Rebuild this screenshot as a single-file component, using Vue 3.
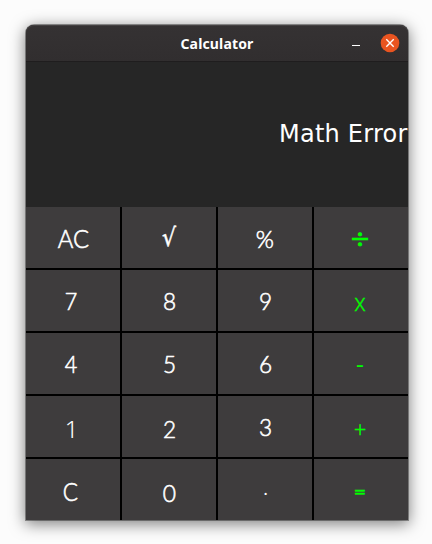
<script setup>
const keys = [
  { label: 'AC', kind: 'letters' }, { label: '√', kind: 'root' }, { label: '%', kind: 'percent' }, { label: '÷', kind: 'op divide' },
  { label: '7', kind: 'digit left' }, { label: '8', kind: 'digit' }, { label: '9', kind: 'digit' }, { label: 'x', kind: 'op times' },
  { label: '4', kind: 'digit left' }, { label: '5', kind: 'digit' }, { label: '6', kind: 'digit' }, { label: '-', kind: 'op minus' },
  { label: '1', kind: 'digit low one' }, { label: '2', kind: 'digit low' }, { label: '3', kind: 'digit' }, { label: '+', kind: 'op plus' },
  { label: 'C', kind: 'letters clear' }, { label: '0', kind: 'digit zero' }, { label: '.', kind: 'dot' }, { label: '=', kind: 'op equals' },
]
</script>

<template>
  <main class="desktop">
    <section class="window">
      <header class="titlebar">
        <span></span>
        <h1>Calculator</h1>
        <div class="controls">
          <button class="minimize" aria-label="Minimize">
            <svg width="8" height="2" viewBox="0 0 8 2"><path d="M0 1.5H8" stroke="#fff" /></svg>
          </button>
          <button class="close" aria-label="Close">
            <svg width="20" height="20" viewBox="0 0 20 20">
              <circle cx="10" cy="10" r="9.3" fill="#e95420" />
              <path d="M6.3 6.3 13.7 13.7M13.7 6.3 6.3 13.7" stroke="#fff" stroke-width="1.4" />
            </svg>
          </button>
        </div>
      </header>
      <div class="display"><span>Math Error</span></div>
      <div class="keypad">
        <button v-for="key in keys" :key="key.label" class="key" :class="key.kind"><span>{{ key.label }}</span></button>
      </div>
    </section>
  </main>
</template>

<style>
body { background: #fcfcfc; overflow: hidden; }
</style>

<style scoped>
.desktop { box-sizing: border-box; width: 432px; height: 544px; padding: 25px 24px 24px 26px; background: #fcfcfc; }
.window {
  width: 382px; height: 495px; display: flex; flex-direction: column;
  border-radius: 8px 8px 0 0; background: #262626;
  box-shadow: 0 0 0 1px rgba(0, 0, 0, .36), 0 3px 15px 1px rgba(0, 0, 0, .5);
}
button { border: 0; padding: 0; margin: 0; background: none; }
svg { display: block; }
.titlebar {
  box-sizing: border-box; height: 37px; flex: none; display: grid; grid-template-columns: 1fr auto 1fr; align-items: center;
  background: linear-gradient(#353233, #312e2f); border-bottom: 1px solid #1f1d1e;
  border-radius: 8px 8px 0 0; box-shadow: inset 0 1px #454243;
}
h1 { margin: 2px 0 0; color: #fff; font: 700 14px/20px "Noto Sans", sans-serif; letter-spacing: .15px; }
.controls { display: flex; justify-content: flex-end; align-items: center; padding-right: 8px; gap: 20px; }
.minimize { padding-top: 4px; }
.display { height: 143px; padding: 0 .5px 2px 0; flex: none; display: flex; align-items: center; justify-content: flex-end; background: #262626; }
.display span { color: #fff; font: 24px/28px "DejaVu Sans", sans-serif; letter-spacing: .23px; white-space: nowrap; }
.keypad { display: grid; grid-template-columns: repeat(4, 94px); grid-template-rows: repeat(5, 61px); gap: 2px; background: #000; }
.key { display: flex; align-items: center; justify-content: center; background: #3e3c3d; color: #fff; font: 24px/30px Lato, sans-serif; overflow: hidden; }
.key span { display: block; }
.digit span { font-weight: 300; -webkit-text-stroke: .6px #fff; transform: translate(.5px, 0) scaleX(.94); }
.digit.left span { transform: translate(-2px, 0) scaleX(.9); }
.digit.low span { transform: translate(.5px, 2px) scaleX(.94); }
.digit.zero span { transform: translate(.5px, 2.5px) scaleX(.95); }
.digit.low.one span { font: 300 24px/30px "Noto Sans", sans-serif; -webkit-text-stroke: 0; transform: translate(-1.5px, 2px); }
.letters span { font-size: 25px; font-weight: 300; -webkit-text-stroke: .6px #fff; transform: scaleX(.95); }
.letters.clear span { transform: translate(-3px, 1px) scaleX(.9); }
.percent span { font-weight: 300; -webkit-text-stroke: .6px #fff; transform: translate(-.5px, 1px) scaleX(.97); }
.root span { font: 25px/30px "DejaVu Sans", sans-serif; -webkit-text-stroke: .5px #fff; transform: translateY(0) scaleX(.88); }
.op { color: #0f0; }
.divide span { font: 25px/30px "Open Sans", sans-serif; -webkit-text-stroke: .6px #0f0; transform: translate(-1px, 0) scale(1.3, 1.15); }
.times span { font: 300 24px/30px "Noto Sans", sans-serif; -webkit-text-stroke: .3px #0f0; transform: translate(-1px, 1px) scaleX(.95); }
.minus span { transform: translate(-1px, 0); }
.plus span { font-size: 21px; font-weight: 300; -webkit-text-stroke: .5px #0f0; transform: translate(-1px, 2px); }
.equals span { font: 700 20px/30px Lato, sans-serif; -webkit-text-stroke: .5px #0f0; transform: translate(-1px, 1px) scale(1.05, .75); }
.dot span { font-size: 18px; transform: translate(.5px, -2px); }
</style>
